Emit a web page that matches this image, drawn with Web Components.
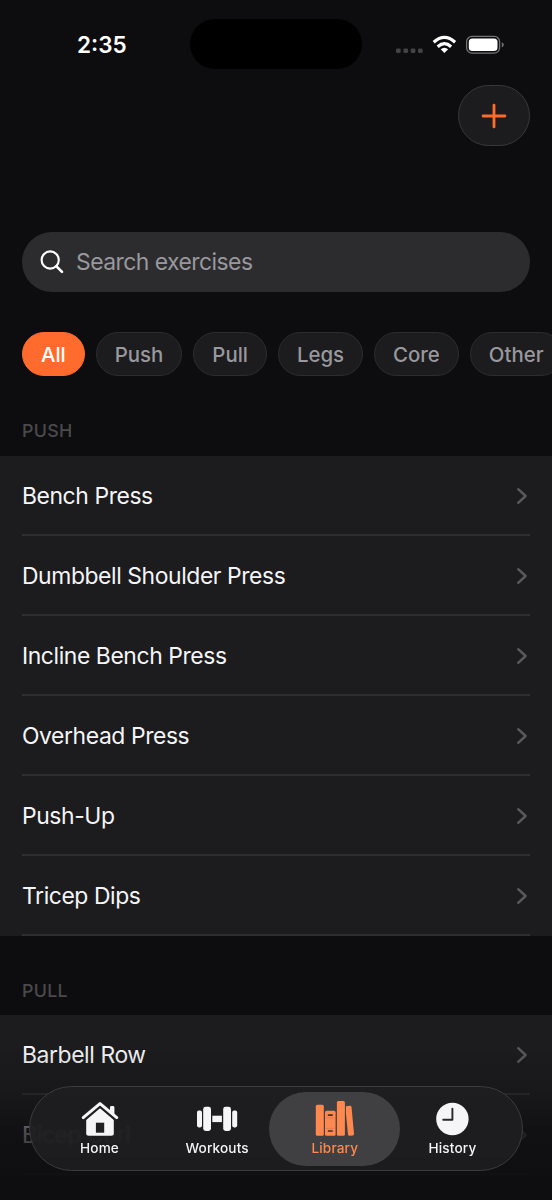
<!DOCTYPE html>
<html lang="en">
<head>
<meta charset="utf-8">
<title>Library</title>
<style>
    html, body {
        margin: 0;
        height: 1200px;
        overflow: hidden;
        background: #0d0d0f;
    }

    body {
        font-family: Inter, "Liberation Sans", sans-serif;
        color: #f5f5f7;
    }
</style>
</head>
<body>
<library-screen>
    <status-bar slot="status">2:35</status-bar>
    <add-button slot="toolbar"></add-button>
    <search-field slot="search">Search exercises</search-field>
    <filter-chip slot="filters" active>All</filter-chip>
    <filter-chip slot="filters">Push</filter-chip>
    <filter-chip slot="filters">Pull</filter-chip>
    <filter-chip slot="filters">Legs</filter-chip>
    <filter-chip slot="filters">Core</filter-chip>
    <filter-chip slot="filters">Other</filter-chip>

    <exercise-section>
        <span slot="title">PUSH</span>
        <exercise-row>Bench Press</exercise-row>
        <exercise-row>Dumbbell Shoulder Press</exercise-row>
        <exercise-row>Incline Bench Press</exercise-row>
        <exercise-row>Overhead Press</exercise-row>
        <exercise-row>Push-Up</exercise-row>
        <exercise-row>Tricep Dips</exercise-row>
    </exercise-section>
    <exercise-section>
        <span slot="title">PULL</span>
        <exercise-row>Barbell Row</exercise-row>
        <exercise-row>Bicep Curl</exercise-row>
        <exercise-row></exercise-row>
    </exercise-section>

    <tab-bar slot="tabs">
        <tab-item icon="home">Home</tab-item>
        <tab-item icon="workouts">Workouts</tab-item>
        <tab-item icon="library" selected>Library</tab-item>
        <tab-item icon="history">History</tab-item>
    </tab-bar>
</library-screen>

<script>
// Attach an open shadow root and fill it
function render(element, html) {
    element.attachShadow({ mode: 'open' }).innerHTML = html;
}

class LibraryScreen extends HTMLElement {
    constructor() {
        super();
        render(this, `
        <style>
            :host {
                display: flex;
                flex-direction: column;
                position: relative;
                width: 552px;
                height: 1200px;
                overflow: hidden;
                background: #0d0d0f;
            }

            .toolbar {
                display: flex;
                justify-content: flex-end;
                flex: none;
                height: 147px;
                padding: 9px 22px 0;
                box-sizing: border-box;
            }

            .search {
                flex: none;
                padding: 0 22px;
            }

            .filters {
                display: flex;
                flex: none;
                gap: 11px;
                padding: 40px 0 0 22px;
                overflow: hidden;
            }

            .list {
                flex: none;
            }

            /* Content fades out behind the tab bar */
            .fade {
                position: absolute;
                left: 0;
                right: 0;
                bottom: 0;
                height: 180px;
                background: linear-gradient(rgba(13,13,15,0) 15%, rgba(13,13,15,.25) 40%, rgba(13,13,15,.72) 62%, rgba(13,13,15,.86) 82%, rgba(13,13,15,.96));
            }

            .tabs {
                position: absolute;
                left: 29px;
                right: 29px;
                bottom: 29px;
            }
        </style>
        <slot name="status"></slot>
        <div class="toolbar"><slot name="toolbar"></slot></div>
        <div class="search"><slot name="search"></slot></div>
        <div class="filters"><slot name="filters"></slot></div>
        <div class="list"><slot></slot></div>
        <div class="fade"></div>
        <div class="tabs"><slot name="tabs"></slot></div>
        `);
    }
}

class StatusBar extends HTMLElement {
    constructor() {
        super();
        render(this, `
        <style>
            :host {
                display: grid;
                grid-template-columns: 190px 172px 190px;
                flex: none;
                height: 76px;
                padding-top: 19px;
                box-sizing: border-box;
            }

            .time {
                padding-left: 77px;
                font-size: 22.5px;
                font-weight: 600;
                line-height: 51px;
                color: #fff;
                white-space: nowrap;
            }

            .island {
                height: 50px;
                border-radius: 25px;
                background: #000;
            }

            svg {
                display: block;
                margin: 13px 0 0 32px;
            }
        </style>
        <div class="time"><slot></slot></div>
        <div class="island"></div>
        <svg width="114" height="26" viewBox="394 32 114 26" fill="none">
            <g fill="#434345">
                <rect x="396" y="48.4" width="4.7" height="4.7" rx="1.4"/>
                <rect x="403.4" y="48.4" width="4.7" height="4.7" rx="1.4"/>
                <rect x="410.7" y="48.4" width="4.7" height="4.7" rx="1.4"/>
                <rect x="418" y="48.4" width="4.7" height="4.7" rx="1.4"/>
            </g>
            <g stroke="#fff" stroke-width="3.2">
                <path d="M433.7 42.3Q444.4 32.6 455.1 42.3"/>
                <path d="M437.7 46.7Q444.4 40.7 451.1 46.7"/>
            </g>
            <path d="M440.7 49.3Q444.4 46.3 448.1 49.3L444.4 53.1Z" fill="#fff"/>
            <rect x="466.6" y="36.4" width="33" height="16.8" rx="5.4" stroke="#747476" stroke-width="1.3"/>
            <rect x="468.8" y="38.5" width="28.7" height="12.6" rx="3.6" fill="#fff"/>
            <path d="M501.8 42.2Q503.8 43 503.8 44.8T501.8 47.4Z" fill="#747476"/>
        </svg>
        `);
    }
}

class AddButton extends HTMLElement {
    constructor() {
        super();
        render(this, `
        <style>
            :host {
                display: flex;
                align-items: center;
                justify-content: center;
                width: 72px;
                height: 61px;
                box-sizing: border-box;
                border: 1px solid #38383a;
                border-radius: 30.5px;
                background: #1c1c1e;
            }
        </style>
        <svg width="26" height="26" viewBox="0 0 26 26" stroke="#ff6b2c" stroke-width="2.8" stroke-linecap="round">
            <path d="M13 2.1V23.9M2.1 13H23.9"/>
        </svg>
        `);
    }
}

class SearchField extends HTMLElement {
    constructor() {
        super();
        render(this, `
        <style>
            :host {
                display: flex;
                align-items: center;
                height: 60px;
                margin-top: 9px;
                padding-left: 18px;
                box-sizing: border-box;
                border-radius: 30px;
                background: #2c2c2e;
                color: #98989d;
                font-size: 22.9px;
                letter-spacing: -0.53px;
            }

            svg {
                margin-right: 12px;
            }
        </style>
        <svg width="24" height="26" viewBox="0 0 24 26" fill="none" stroke="#fff" stroke-linecap="round">
            <circle cx="10.2" cy="11" r="8.6" stroke-width="2.1"/>
            <path d="M16.5 17.3L22 22.8" stroke-width="2.6"/>
        </svg>
        <span><slot></slot></span>
        `);
    }
}

class FilterChip extends HTMLElement {
    constructor() {
        super();
        render(this, `
        <style>
            :host {
                display: block;
                flex: none;
                height: 44px;
                padding: 0 18px;
                box-sizing: border-box;
                border: 1.4px solid #2c2c2e;
                border-radius: 22px;
                background: #1c1c1e;
                color: #98989d;
                font-size: 20.4px;
                font-weight: 500;
                line-height: 43.4px;
            }

            :host([active]) {
                border-color: #ff6b2c;
                background: #ff6b2c;
                color: #fff;
            }
        </style>
        <slot></slot>
        `);
    }
}

class ExerciseSection extends HTMLElement {
    constructor() {
        super();
        render(this, `
        <style>
            :host {
                display: block;
            }

            .title {
                height: 79.5px;
                padding: 44px 0 0 22px;
                box-sizing: border-box;
                color: #4a4a4c;
                font-size: 17.8px;
                font-weight: 500;
                letter-spacing: 0.3px;
                line-height: 22px;
            }

            .rows {
                background: #1c1c1e;
            }
        </style>
        <div class="title"><slot name="title"></slot></div>
        <div class="rows"><slot></slot></div>
        `);
    }
}

class ExerciseRow extends HTMLElement {
    constructor() {
        super();
        render(this, `
        <style>
            :host {
                display: flex;
                align-items: center;
                justify-content: space-between;
                height: 80px;
                margin: 0 22px;
                padding: 2px 2px 0 0;
                box-sizing: border-box;
                border-bottom: 2px solid #2e2e30;
                font-size: 22.9px;
                letter-spacing: -0.41px;
            }
        </style>
        <span><slot></slot></span>
        <svg width="12" height="18" viewBox="0 0 12 18" fill="none" stroke="#5a5a5e" stroke-width="2.4" stroke-linecap="round" stroke-linejoin="round">
            <path d="M2.2 2.2L9.6 9L2.2 15.8"/>
        </svg>
        `);
    }
}

class TabBar extends HTMLElement {
    constructor() {
        super();
        render(this, `
        <style>
            :host {
                display: flex;
                justify-content: space-between;
                height: 85px;
                padding: 5px 4px;
                box-sizing: border-box;
                border: 1px solid #3c3c3e;
                border-radius: 42.5px;
                background: rgba(31,31,33,.88);
                backdrop-filter: blur(1px);
            }
        </style>
        <slot></slot>
        `);
    }
}

const TAB_ICONS = {
    home: `
        <path d="M22 9.6L35.8 21.2V35.2Q35.8 37.7 33.3 37.7H10.7Q8.2 37.7 8.2 35.2V21.2Z" fill="currentColor"/>
        <path d="M5.2 20.2L22 6L38.8 20.2" fill="none" stroke="#202022" stroke-width="6.4"/>
        <path d="M36.4 17V9.4Q36.4 8 35 8H33.4Q32 8 32 9.4V14Z" fill="currentColor"/>
        <path d="M5.2 19.6L22 5.6L38.8 19.6" fill="none" stroke="currentColor" stroke-width="3" stroke-linecap="round" stroke-linejoin="round"/>
        <rect x="17.9" y="24.7" width="8.3" height="10" fill="#202022"/>`,
    workouts: `
        <g fill="currentColor">
            <rect x="2" y="12.6" width="5" height="16.8" rx="1.8"/>
            <rect x="8.2" y="8.8" width="7.8" height="24.2" rx="2.4"/>
            <rect x="17.3" y="17.7" width="9.6" height="6.4"/>
            <rect x="28.2" y="8.8" width="7.8" height="24.2" rx="2.4"/>
            <rect x="37.2" y="12.6" width="5" height="16.8" rx="1.8"/>
        </g>`,
    library: `
        <g fill="currentColor">
            <rect x="2.8" y="6.8" width="8" height="31" rx="1.5"/>
            <rect x="12" y="12.8" width="10.6" height="25" rx="1.5"/>
            <rect x="23.9" y="3" width="8" height="34.8" rx="1.5"/>
            <path d="M32.9 8.2L37 7.7Q38.3 7.6 38.5 9L41 35.8Q41.1 37.3 39.8 37.5L36.6 37.8Q35.2 37.9 35 36.4L32.9 15Z"/>
        </g>
        <path d="M14.8 17.2H19.8M14.8 33H19.8" stroke="#4a2e24" stroke-width="1.7"/>
        <path d="M13 20H21.6M13 30.3H21.6" stroke="#d8713f" stroke-width=".6"/>`,
    history: `
        <circle cx="22.4" cy="21" r="16.2" fill="currentColor"/>
        <path d="M22.4 10.6V21.8H13.2" fill="none" stroke="#28282a" stroke-width="1.9" stroke-linecap="round" stroke-linejoin="round"/>`
};

class TabItem extends HTMLElement {
    connectedCallback() {
        render(this, `
        <style>
            :host {
                display: flex;
                flex-direction: column;
                align-items: center;
                flex: none;
                width: 131px;
                height: 74px;
                margin-right: -14px;
                padding-top: 6px;
                box-sizing: border-box;
                border-radius: 37px;
                font-size: 13.6px;
                font-weight: 500;
                line-height: 18px;
                letter-spacing: 0.15px;
            }

            :host(:last-child) {
                margin-right: 0;
            }

            :host([selected]) {
                background: #404042;
                color: #ff884f;
            }

            svg {
                display: block;
            }
        </style>
        <svg width="44" height="41" viewBox="0 0 44 41">${TAB_ICONS[this.getAttribute('icon')]}</svg>
        <span><slot></slot></span>
        `);
    }
}

// Define the custom elements
customElements.define('library-screen', LibraryScreen);
customElements.define('status-bar', StatusBar);
customElements.define('add-button', AddButton);
customElements.define('search-field', SearchField);
customElements.define('filter-chip', FilterChip);
customElements.define('exercise-section', ExerciseSection);
customElements.define('exercise-row', ExerciseRow);
customElements.define('tab-bar', TabBar);
customElements.define('tab-item', TabItem);
</script>
</body>
</html>
